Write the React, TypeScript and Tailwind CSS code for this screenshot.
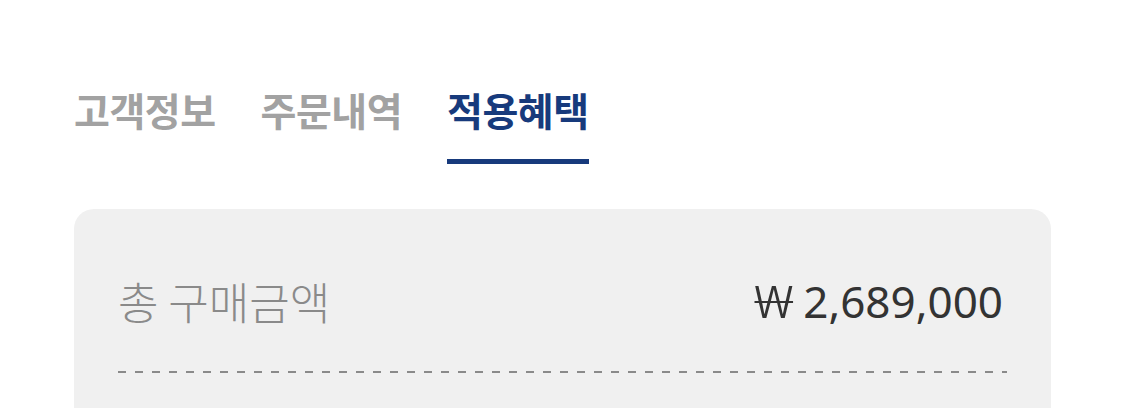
const TABS = [
  { label: "고객정보", active: false },
  { label: "주문내역", active: false },
  { label: "적용혜택", active: true },
];

export default function App() {
  return (
    <div className="min-h-screen bg-white px-[74px] pt-[84px] font-['Noto_Sans_CJK_KR','Noto_Sans',sans-serif]">
      {/* Tabs */}
      <nav className="flex gap-[45px]">
        {TABS.map((t) => (
          <div key={t.label} className="flex flex-col items-stretch">
            <span
              className={
                t.active
                  ? "text-[39px] font-bold leading-[50px] tracking-[-0.5px] text-[#173a7c]"
                  : "text-[39px] font-bold leading-[50px] tracking-[-0.5px] text-[#a2a2a2]"
              }
            >
              {t.label}
            </span>
            <div className={t.active ? "mt-[25px] h-[5px] w-full bg-[#173a7c]" : "mt-[25px] h-[5px] w-full bg-transparent"} />
          </div>
        ))}
      </nav>

      {/* Summary card */}
      <section className="mt-[45px] rounded-[20px] bg-[#f0f0f0] px-[44px] pb-[60px] pt-[66px]">
        <div className="flex items-center justify-between">
          <span className="text-[44px] font-light leading-[52px] text-[#8a8a8a]">총 구매금액</span>
          <span className="pr-[4px] font-['Noto_Sans','Noto_Sans_CJK_KR',sans-serif] text-[44px] font-normal leading-[52px] text-[#333333]">
            <span className="mr-[10px] inline-block origin-left scale-x-[1.42] font-light">₩</span> 2,689,000
          </span>
        </div>
        <div className="mt-[44px] h-[2px] w-full bg-[repeating-linear-gradient(90deg,#8a8a8a_0_8px,transparent_8px_17px)]" />
      </section>
    </div>
  );
}
